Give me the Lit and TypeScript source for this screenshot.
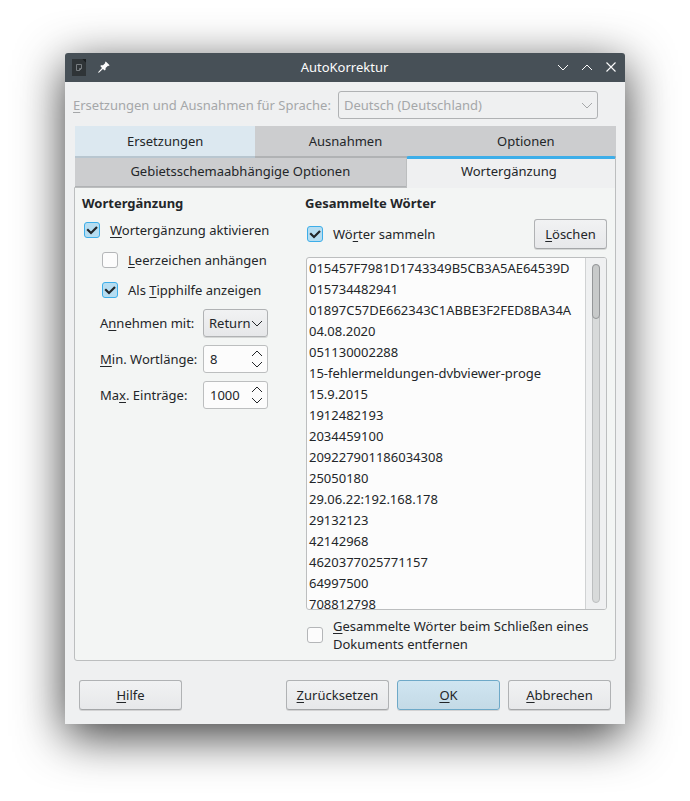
import { LitElement, html, css, svg } from "lit";
import { customElement, property, state } from "lit/decorators.js";

const WORDS = [
  "015457F7981D1743349B5CB3A5AE64539D",
  "015734482941",
  "01897C57DE662343C1ABBE3F2FED8BA34A",
  "04.08.2020",
  "051130002288",
  "15-fehlermeldungen-dvbviewer-proge",
  "15.9.2015",
  "1912482193",
  "2034459100",
  "209227901186034308",
  "25050180",
  "29.06.22:192.168.178",
  "29132123",
  "42142968",
  "4620377025771157",
  "64997500",
  "708812798",
];

/** Splits a caption at "_" and underlines the access key that follows it. */
function caption(text: string) {
  const i = text.indexOf("_");
  if (i < 0) return html`${text}`;
  return html`${text.slice(0, i)}<span class="key">${text[i + 1]}</span>${text.slice(i + 2)}`;
}

const chevron = (up = false) => html`<svg class="chevron" width="12" height="7" viewBox="0 0 12 7" aria-hidden="true">
  ${up ? svg`<path d="M1 6 L6 1 L11 6"></path>` : svg`<path d="M1 1 L6 6 L11 1"></path>`}
</svg>`;

const base = css`
  * {
    box-sizing: border-box;
  }
  button,
  input,
  select {
    font: inherit;
    color: inherit;
    margin: 0;
    padding: 0;
    border: 0;
    background: none;
  }
  svg {
    display: block;
  }
  .key {
    text-decoration: underline 1px;
    text-underline-offset: 2px;
    text-decoration-skip-ink: none;
  }
  .chevron {
    fill: none;
    stroke: currentColor;
    stroke-width: 1;
  }
`;

@customElement("check-option")
export class CheckOption extends LitElement {
  @property() label = "";
  @property({ type: Boolean }) checked = false;

  static styles = [
    base,
    css`
      :host {
        display: block;
      }
      .option {
        display: flex;
        align-items: center;
        gap: 10px;
      }
      .mark {
        display: grid;
        flex: none;
      }
      .mark > * {
        grid-area: 1 / 1;
      }
      .tick {
        width: 16px;
        height: 16px;
        appearance: none;
        border: 1px solid #b4b6b8;
        border-radius: 3px;
        background: #fcfcfc;
      }
      .tick:checked {
        border-color: #3daee9;
        background: #b6ddf1;
      }
      .check {
        display: none;
        pointer-events: none;
        fill: none;
        stroke: #232629;
        stroke-width: 2.2;
      }
      .tick:checked + .check {
        display: block;
      }
    `,
  ];

  render() {
    return html`<label class="option">
      <span class="mark">
        <input class="tick" type="checkbox" .checked=${this.checked}
          @change=${(e: Event) => (this.checked = (e.target as HTMLInputElement).checked)} />
        <svg class="check" width="16" height="16" viewBox="0 0 16 16" aria-hidden="true">
          <path d="M3.2 7.3 L7 11 L13 5"></path>
        </svg>
      </span>
      <span>${caption(this.label)}</span>
    </label>`;
  }
}

@customElement("spin-field")
export class SpinField extends LitElement {
  @property({ type: Number }) value = 0;
  @property() label = "";

  static styles = [
    base,
    css`
      :host {
        display: contents;
      }
      .spin {
        display: flex;
        height: 28px;
        border: 1px solid #bcbebf;
        border-radius: 3px;
        background: #fcfcfc;
      }
      .value {
        flex: 1;
        width: 0;
        padding-left: 6px;
        outline: 0;
        appearance: textfield;
      }
      .value::-webkit-inner-spin-button {
        appearance: none;
        margin: 0;
      }
      .steps {
        display: grid;
        padding: 2px 0;
      }
      .step {
        display: grid;
        place-items: center;
        width: 21px;
      }
    `,
  ];

  render() {
    return html`<label for="value">${caption(this.label)}</label>
      <div class="spin">
        <input class="value" id="value" type="number" .value=${String(this.value)} />
        <div class="steps">
          <button class="step" aria-label="Erhöhen" @click=${() => this.value++}>${chevron(true)}</button>
          <button class="step" aria-label="Verringern" @click=${() => this.value--}>${chevron()}</button>
        </div>
      </div>`;
  }
}

@customElement("app-root")
export class AppRoot extends LitElement {
  @state() private tab = "Wortergänzung";

  static styles = [
    base,
    css`
      :host {
        display: block;
        box-sizing: border-box;
        min-height: 100vh;
        padding: 53px 65px 77px;
        background: #fff;
        color: #232629;
        font: 13px/18px "Noto Sans", sans-serif;
      }
      .dialog {
        border-radius: 3px 3px 0 0;
        background: #eff0f1;
        box-shadow: 0 12px 48px rgba(0, 0, 0, 0.78);
      }
      .titlebar {
        display: grid;
        grid-template-columns: 1fr auto 1fr;
        align-items: center;
        height: 29px;
        padding: 0 8px 1px 7px;
        border-radius: 3px 3px 0 0;
        background: #475057;
        color: #fcfcfc;
      }
      .title {
        margin: 0;
        font: inherit;
      }
      .left,
      .right {
        display: flex;
        align-items: center;
        gap: 12px;
      }
      .right {
        justify-content: flex-end;
      }
      .cross {
        fill: none;
        stroke: currentColor;
        stroke-width: 1.1;
      }
      .body {
        padding: 9px 9px 14px 8px;
      }
      .language {
        display: flex;
        align-items: center;
        justify-content: space-between;
        padding-right: 18px;
        color: #a5a7a9;
      }
      .picker {
        display: grid;
        align-items: center;
      }
      .picker > * {
        grid-area: 1 / 1;
      }
      .picker .chevron {
        justify-self: end;
        margin-right: 5px;
        pointer-events: none;
      }
      .select {
        appearance: none;
        width: 100%;
        height: 28px;
        padding: 0 5px;
        border: 1px solid #b0b2b4;
        border-radius: 3px;
        opacity: 1;
      }
      .language .picker {
        width: 260px;
      }
      .accept .select {
        background: linear-gradient(#f1f2f3, #e6e7e9);
        box-shadow: 0 1px 0 rgba(0, 0, 0, 0.12);
      }
      .tabs {
        margin: 7px 0 0 2px;
      }
      .tabrow {
        display: grid;
        grid-template-columns: 1fr 1fr 1fr;
      }
      .tabrow.second {
        grid-template-columns: 11fr 7fr;
        height: 30px;
      }
      .tab {
        height: 32px;
        border-bottom: 2px solid #b0b2b4;
        background: #cccdcf;
      }
      .second .tab {
        height: 29px;
        padding-bottom: 2px;
        border-bottom-width: 1px;
      }
      .tab.hover {
        border-color: #b8c6d0;
        background: #dce8f0;
      }
      .second .tab.active {
        height: 32px;
        margin-top: -2px;
        padding: 0 4px 6px 0;
        border: 1px solid #bcbebf;
        border-top: 3px solid #3daee9;
        border-bottom: 0;
        border-radius: 3px 3px 0 0;
        background: #eff0f1;
      }
      .panel {
        display: grid;
        grid-template-columns: 215fr 302fr;
        gap: 8px;
        margin: -1px 0 0 1px;
        padding: 6px 8px 7px 7px;
        border: 1px solid #bcbebf;
        border-radius: 0 0 3px 3px;
        background: #f3f5f4;
      }
      .heading {
        margin: 0;
        font-size: 13px;
        line-height: 18px;
      }
      .checks {
        display: grid;
        gap: 12px;
        padding: 9px 0 10px 2px;
      }
      .nested {
        padding-left: 18px;
      }
      .fields {
        display: grid;
        grid-template-columns: 95px 65px;
        column-gap: 8px;
        row-gap: 8px;
        align-items: center;
        padding-left: 18px;
      }
      .fields,
      .fields label {
        white-space: nowrap;
      }
      .collect {
        display: flex;
        align-items: center;
        justify-content: space-between;
        margin: 7px 0 8px;
        padding-left: 2px;
      }
      .push {
        height: 30px;
        min-width: 73px;
        border: 1px solid #b0b2b4;
        border-bottom-color: #a4a6a8;
        border-radius: 3px;
        background: linear-gradient(#f1f2f3, #e7e8ea);
        box-shadow: 0 1px 0 rgba(0, 0, 0, 0.12);
      }
      .list {
        display: flex;
        height: 353px;
        margin-left: 1px;
        border: 1px solid #bcbebf;
        border-radius: 3px;
        background: #fcfcfc;
        overflow: hidden;
      }
      .words {
        flex: 1;
        margin: 0;
        padding: 0 2px;
        list-style: none;
        line-height: 21px;
        overflow: hidden;
      }
      .scrollbar {
        display: flex;
        justify-content: center;
        width: 21px;
        padding: 6px 0;
        border-left: 1px solid #d0d2d3;
        background: #eff0f1;
      }
      .track {
        width: 8px;
        border: 1px solid #bcbebf;
        border-radius: 4px;
        background: #d8dada;
      }
      .thumb {
        height: 55px;
        margin: -1px;
        border: 1px solid #959799;
        border-radius: 4px;
        background: #c8caca;
      }
      .purge {
        padding: 7px 0 0 2px;
      }
      .actions {
        display: flex;
        gap: 8px;
        margin-top: 19px;
        padding: 0 5px 0 6px;
      }
      .actions .push {
        width: 103px;
      }
      .actions .help {
        margin-right: auto;
      }
      .push.primary {
        border-color: #6ea9c8;
        background: linear-gradient(#cfe5f1, #c4dae6);
      }
    `,
  ];

  private tabButton(name: string, hover = false) {
    const active = this.tab === name;
    return html`<button
      class="tab ${active ? "active" : ""} ${hover ? "hover" : ""}"
      role="tab"
      aria-selected=${active}
      @click=${() => (this.tab = name)}
    >${name}</button>`;
  }

  render() {
    return html`<main class="dialog">
      <header class="titlebar">
        <div class="left">
          <svg width="14" height="17" viewBox="0 0 14 17" aria-hidden="true">
            <path d="M0 0 H10 L14 4 V17 H0 Z" fill="#2f3437"></path>
            <path d="M10 0 H14 V4 Z" fill="#1a1d1f"></path>
            <path d="M4.5 5.5 H9.5 V9.5 L7.5 11.5 H4.5 Z M9.5 9.5 H7.5 V11.5" fill="none" stroke="#777c80"></path>
          </svg>
          <button aria-label="Anheften">
            <svg width="12" height="12" viewBox="0 0 12 12" aria-hidden="true">
              <path d="M7.8 0.4 L11.6 4.2 L10.6 5 L10 4.8 L7.6 7 L7.6 8.6 L6.8 9.4 L4.9 7.9 L1.2 11.4 L0 11.8 L0.5 10.7 L4 7 L2.3 5 L3.1 4.2 L5 4.3 L7.3 2 L7 1.3 Z" fill="#fcfcfc"></path>
            </svg>
          </button>
        </div>
        <h1 class="title">AutoKorrektur</h1>
        <div class="right">
          <button aria-label="Minimieren">${chevron()}</button>
          <button aria-label="Maximieren">${chevron(true)}</button>
          <button aria-label="Schließen">
            <svg class="cross" width="12" height="10" viewBox="0 0 12 10" aria-hidden="true">
              <path d="M1.5 0.5 L10.5 9.5 M10.5 0.5 L1.5 9.5"></path>
            </svg>
          </button>
        </div>
      </header>
      <div class="body">
        <div class="language">
          <label for="lang">${caption("_Ersetzungen und Ausnahmen für Sprache:")}</label>
          <div class="picker">
            <select class="select" id="lang" disabled><option>Deutsch (Deutschland)</option></select>
            ${chevron()}
          </div>
        </div>
        <div class="tabs" role="tablist">
          <div class="tabrow">
            ${this.tabButton("Ersetzungen", true)} ${this.tabButton("Ausnahmen")} ${this.tabButton("Optionen")}
          </div>
          <div class="tabrow second">
            ${this.tabButton("Gebietsschemaabhängige Optionen")} ${this.tabButton("Wortergänzung")}
          </div>
        </div>
        <div class="panel" role="tabpanel">
          <section>
            <h2 class="heading">Wortergänzung</h2>
            <div class="checks">
              <check-option label="_Wortergänzung aktivieren" checked></check-option>
              <check-option class="nested" label="_Leerzeichen anhängen"></check-option>
              <check-option class="nested" label="Als _Tipphilfe anzeigen" checked></check-option>
            </div>
            <div class="fields">
              <label for="accept">${caption("A_nnehmen mit:")}</label>
              <div class="picker accept">
                <select class="select" id="accept"><option>Return</option></select>
                ${chevron()}
              </div>
              <spin-field label="_Min. Wortlänge:" .value=${8}></spin-field>
              <spin-field label="Ma_x. Einträge:" .value=${1000}></spin-field>
            </div>
          </section>
          <section>
            <h2 class="heading">Gesammelte Wörter</h2>
            <div class="collect">
              <check-option label="Wö_rter sammeln" checked></check-option>
              <button class="push">${caption("_Löschen")}</button>
            </div>
            <div class="list">
              <ul class="words">${WORDS.map((w) => html`<li>${w}</li>`)}</ul>
              <div class="scrollbar"><div class="track"><div class="thumb"></div></div></div>
            </div>
            <check-option class="purge" label="_Gesammelte Wörter beim Schließen eines Dokuments entfernen"></check-option>
          </section>
        </div>
        <footer class="actions">
          <button class="push help">${caption("_Hilfe")}</button>
          <button class="push">${caption("_Zurücksetzen")}</button>
          <button class="push primary">${caption("_OK")}</button>
          <button class="push">${caption("_Abbrechen")}</button>
        </footer>
      </div>
    </main>`;
  }
}
